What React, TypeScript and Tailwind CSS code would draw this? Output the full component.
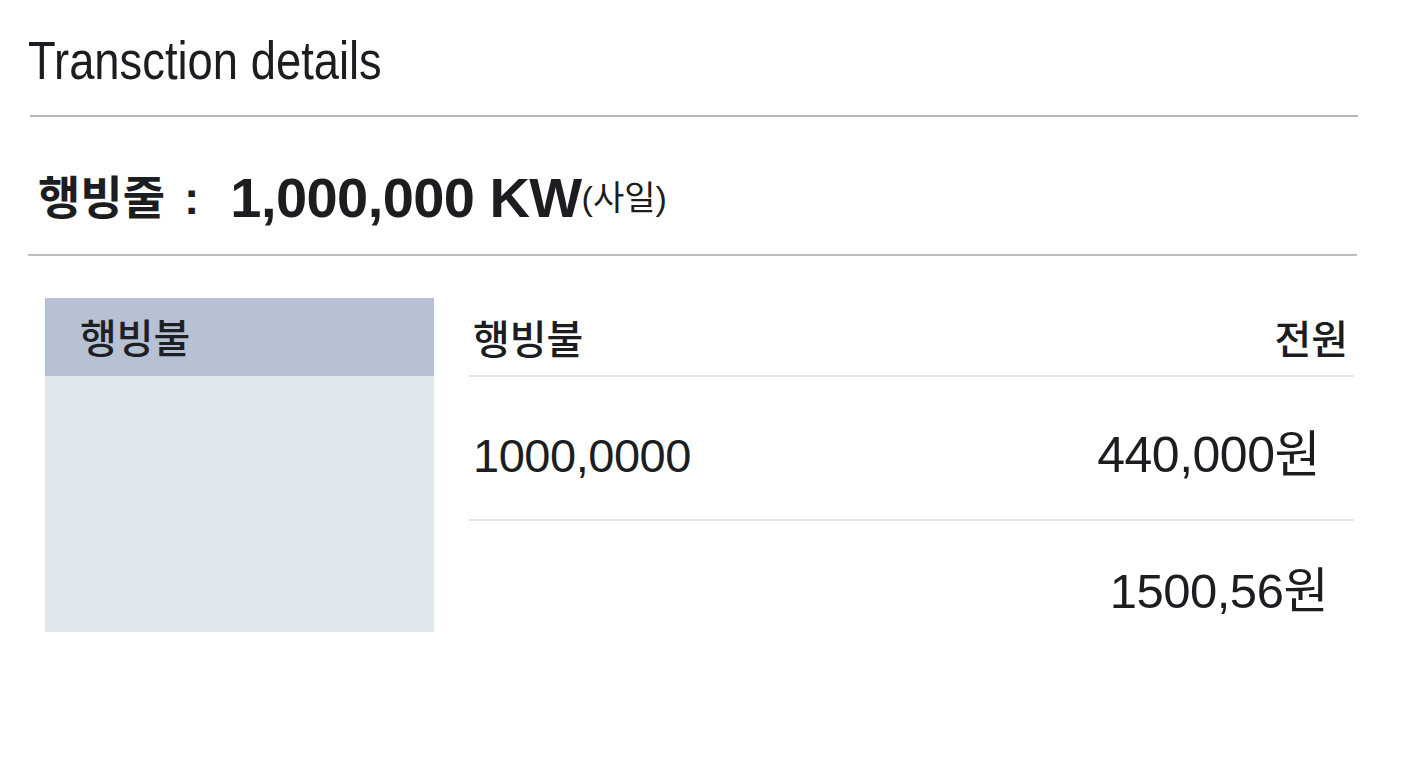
const font = { fontFamily: '"Liberation Sans", "Noto Sans CJK KR", sans-serif' };

const rows = [
  { left: '1000,0000', right: '440,000원', pr: 'pr-[34px]', h: 'h-[144px]', pt: 'pt-[14px]', size: 'text-[50px]' },
  { left: '', right: '1500,56원', pr: 'pr-[26px]', h: 'h-[140px]', pt: 'pt-[0px]', size: 'text-[49px]' },
];

export default function App() {
  return (
    <div className="w-[1408px] h-[768px] bg-white text-[#1c1d20] overflow-hidden" style={font}>
      <div className="pl-[28px] pr-[50px]">
        {/* Title */}
        <div className="h-[115px] pt-[4px] flex items-center">
          <h1 className="text-[54px] leading-none font-normal origin-left scale-x-[0.84] whitespace-nowrap">
            Transction details
          </h1>
        </div>
        <div className="h-[2px] ml-[2px] bg-[#b3b6bc]" />

        {/* Total */}
        <div className="h-[137px] pt-[24px] pl-[10px] flex items-center whitespace-nowrap">
          <span className="text-[46px] leading-none font-bold">행빙줄</span>
          <span className="text-[46px] leading-none font-bold ml-[19px] mr-[31px]">:</span>
          <span className="text-[56px] leading-none font-bold tracking-[-0.01em]">1,000,000 KW</span>
          <span className="text-[34px] leading-none font-normal">(사일)</span>
        </div>
        <div className="h-[2px] mr-[1px] bg-[#babcc1]" />

        {/* Details */}
        <div className="mt-[42px] flex">
          <div className="ml-[17px] w-[389px] h-[334px] bg-[#e1e7ef] flex flex-col">
            <div className="h-[78px] pt-[4px] bg-[#b6c2d3] pl-[35px] flex items-center">
              <span className="text-[40px] leading-none font-medium text-[#1e2024]">행빙불</span>
            </div>
          </div>

          <div className="ml-[35px] w-[885px] flex flex-col">
            <div className="h-[79px] pt-[6px] flex items-center justify-between pl-[4px] pr-[6px] border-b-2 border-[#e3e4e8]">
              <span className="text-[40px] leading-none font-medium">행빙불</span>
              <span className="text-[40px] leading-none font-medium">전원</span>
            </div>
            {rows.map((r, i) => (
              <div
                key={i}
                className={`${r.h} ${r.pt} flex items-center justify-between pl-[4px] ${r.pr} ${i === 0 ? 'border-b-2 border-[#e3e4e8]' : ''}`}
              >
                <span className="text-[47px] leading-none tracking-[-0.01em]">{r.left}</span>
                <span className={`${r.size} leading-none tracking-[-0.01em]`}>{r.right}</span>
              </div>
            ))}
          </div>
        </div>
      </div>
    </div>
  );
}
